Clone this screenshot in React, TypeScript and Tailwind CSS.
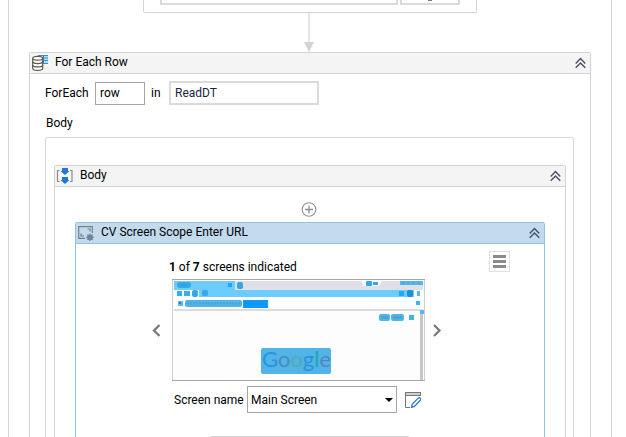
import type { ReactNode } from "react";

function CollapseButton({ label }: { label: string }) {
  return (
    <button type="button" aria-label={label} className="mr-1 h-3 w-3">
      <svg viewBox="0 0 12 12" className="h-3 w-3" fill="none" stroke="#465063" strokeWidth="1.4">
        <path d="M1.7 6.400 6.500 1.600l4.800 4.800M1.700 10.800 6.500 6l4.800 4.800" />
      </svg>
    </button>
  );
}

function DataTableIcon() {
  return (
    <svg viewBox="0 0 17 16" className="h-4 w-[17px]">
      <rect x="7" y="0" width="10" height="9" fill="#b5daf2" />
      <path d="M7 .5h10M7 3h10M7 5.500h10M7 8.500h10" stroke="#3b8dca" />
      <path d="M12.500 0v9" stroke="#3b8dca" />
      <path
        d="M1.700 3.400v9.800c0 1.200 2.200 2.100 5 2.100s5-.9 5-2.100V3.400"
        fill="#fff"
        stroke="#5c5a4c"
        strokeWidth="1.200"
      />
      <ellipse cx="6.700" cy="3.300" rx="5" ry="1.900" fill="#fff" stroke="#5c5a4c" strokeWidth="1.200" />
      <path
        d="M1.700 6.600c0 1.200 2.200 2 5 2s5-.8 5-2M1.700 9.900c0 1.200 2.200 2 5 2s5-.8 5-2"
        fill="none"
        stroke="#5c5a4c"
        strokeWidth="1.200"
      />
    </svg>
  );
}

function SequenceIcon() {
  return (
    <svg viewBox="0 0 17 16" className="h-4 w-[17px]">
      <path d="M3.500 2.500h-2v11h2M14 2.500h2v11h-2" fill="none" stroke="#8a8a8a" strokeWidth="1.200" />
      <path d="M6 0h6v3h1.500L9 7 4.500 3H6z" fill="#1f78d8" />
      <path d="M6 9h6v3h1.500L9 16l-4.500-4H6z" fill="#1f78d8" />
    </svg>
  );
}

function ScreenScopeIcon() {
  return (
    <svg viewBox="0 0 17 16" className="h-4 w-[17px]" fill="none" stroke="#75808a">
      <path d="M15.300 8V1.700H1.700v11.600H8" strokeWidth="1.200" />
      <path d="M10.500 4H13v2.500M4 8.500V11h3" strokeWidth="1.200" />
      <circle cx="13" cy="12.300" r="2.100" strokeWidth="1.500" fill="#3d8edb" />
      <path
        d="M13 8.600v1.500M13 14.500V16M9.300 12.300h1.500M15.200 12.300h1.500M10.400 9.700l1 1M14.600 13.900l1 1M10.400 14.900l1-1M14.600 10.700l1-1"
        strokeWidth="1.200"
      />
    </svg>
  );
}

function EditIcon() {
  return (
    <svg viewBox="0 0 16 16" className="h-4 w-4" fill="none">
      <path d="M.5 0v15.500H5M15.500 0v4" stroke="#77777b" />
      <path d="M0 .5h16M0 3.500h16" stroke="#777" />
      <path d="M1 2h14" stroke="#cfcfcf" strokeWidth="2" />
      <path
        d="m6.500 15.300.8-3.200 6.200-6.200c.9-.8 3 1.200 2.100 2.100l-6.200 6.400z"
        fill="#fff"
        stroke="#2775dc"
        strokeWidth="1.300"
      />
    </svg>
  );
}

/* Captured browser window with the detected regions highlighted */
function ScreenThumbnail() {
  return (
    <svg viewBox="0 0 253 102" className="h-[102px] w-[253px]" role="img" aria-label="Main Screen">
      <rect width="253" height="102" fill="#fdfdfd" />
      <rect x="2" y="2" width="249" height="9" fill="#dfe0e7" />
      <rect x="2" y="2" width="61" height="9" fill="#6dccff" />
      <rect x="5" y="3" width="14" height="6" rx="3" fill="#35aae8" />
      <path d="M8 6h8" stroke="#2f9bd8" />
      <rect x="56" y="4" width="4" height="4" fill="#1ea5f2" />
      <rect x="65" y="3" width="6" height="7" rx="2" fill="#39a5df" />
      <path d="M189 2h21l-3 5h-15z" fill="#fff" />
      <rect x="194" y="2" width="6" height="5" rx="1" fill="#33a7e5" />
      <rect x="201" y="3" width="5" height="3" fill="#33a7e5" />
      <rect x="228" y="2" width="23" height="4" fill="#55b7ea" />
      <path d="M230 4h19" stroke="#45a6dc" strokeDasharray="3 2" />

      <rect x="2" y="11" width="249" height="19" fill="#fff" />
      <rect x="27" y="11" width="215" height="7" fill="#6dccff" />
      <rect x="5" y="12" width="5" height="5" fill="#2fb0f8" />
      <rect x="12" y="12" width="6" height="5" fill="#2fb0f8" />
      <rect x="20" y="11" width="6" height="7" rx="2" fill="#35a6e4" />
      <rect x="30" y="11" width="6" height="6" rx="2" fill="#35a9ea" />
      <rect x="227" y="12" width="5" height="5" fill="#22a9f3" />
      <rect x="235" y="11" width="6" height="7" rx="2" fill="#1592dd" />
      <rect x="245" y="12" width="3" height="5" fill="#4abaf5" />

      <rect x="6" y="22" width="5" height="5" fill="#55bdf2" />
      <path d="M7 24h2" stroke="#46759b" strokeWidth="2" />
      <rect x="13" y="21" width="57" height="7" rx="2" fill="#50b4e9" />
      <path d="M15 24.500h53" stroke="#46a6dc" strokeWidth="2" strokeDasharray="2 1" />
      <rect x="71" y="21" width="25" height="8" fill="#0b9bfb" />
      <path d="M74 24.500h18" stroke="#1b90ea" strokeWidth="2" />
      <rect x="244" y="22" width="4" height="4" fill="#3cb2f1" />
      <rect x="2" y="30" width="249" height="2" fill="#dcdcdc" />

      <rect x="248" y="32" width="3" height="69" fill="#c6c6c6" />
      <rect x="248" y="31" width="4" height="4" fill="#51b9f3" />
      <rect x="207" y="35" width="11" height="7" rx="2" fill="#50b4e6" />
      <path d="M209 38.500h7" stroke="#46a0d0" strokeWidth="2" />
      <rect x="219" y="35" width="13" height="7" rx="2" fill="#50b4e6" />
      <path d="M221 38.500h9" stroke="#46a0d0" strokeWidth="2" />
      <rect x="237" y="36" width="5" height="5" fill="#45b2e8" />

      <rect x="89" y="69" width="70" height="26" rx="2" fill="#50b4e6" />
      <text x="90" y="88" fontFamily="Lato, sans-serif" fontSize="22">
        <tspan fill="#2c92dc">G</tspan>
        <tspan fill="#4e88bd">o</tspan>
        <tspan fill="#54aaa8">o</tspan>
        <tspan fill="#2c92dc">g</tspan>
        <tspan fill="#2ba2b2">l</tspan>
        <tspan fill="#4e88bd">e</tspan>
      </text>

      <path d="M.5 1v100M252.500 1v100" stroke="#cfcfcf" />
      <path d="M0 .5h253M0 101.500h253" stroke="#a6a6a6" />
    </svg>
  );
}

interface ActivityHeaderProps {
  icon: ReactNode;
  title: string;
  selected?: boolean;
}

function ActivityHeader({ icon, title, selected }: ActivityHeaderProps) {
  return (
    <div
      className={
        selected
          ? "flex h-[21px] items-center border-b border-[#94c2e3] bg-[#c1dbed] pl-px"
          : "flex h-[21px] items-center border-b border-[#d3d3d3] bg-[#f4f4f4] pl-px"
      }
    >
      <span className="w-6">{icon}</span>
      <h2 className="flex-1 pb-[2px]">{title}</h2>
      <CollapseButton label={`Collapse ${title}`} />
    </div>
  );
}

export default function App() {
  return (
    <div className="h-screen overflow-hidden bg-white font-[Roboto,'Noto_Sans',sans-serif] text-[12px] leading-4 text-black">
      <main className="mr-[14px] ml-2 border-x border-[#d3d3d3]">
        {/* Tail of the previous activity */}
        <div className="mx-auto flex h-[13px] w-[334px] justify-center gap-[2px] rounded-b-[2px] border border-t-0 border-[#d3d3d3]">
          <div className="h-[5px] w-[238px] border-2 border-t-0 border-[#dadada]" />
          <div className="flex h-[5px] w-[60px] justify-center border-2 border-t-0 border-[#dadada]">
            <span className="h-px w-1 bg-[#6d7f98]" />
          </div>
        </div>

        <svg viewBox="0 0 12 39" className="mx-auto block h-[39px] w-3">
          <path d="M5 0v30" stroke="#e6e6e6" strokeWidth="2" />
          <path d="M0 29h10L5 39z" fill="#d3d3d3" />
        </svg>

        {/* For Each Row */}
        <section className="mx-5 rounded-t-[2px] border border-[#d3d3d3]">
          <ActivityHeader icon={<DataTableIcon />} title="For Each Row" />

          <div className="pt-[7px] pr-4 pl-[15px]">
            <div className="flex h-6 items-center">
              <label htmlFor="item" className="w-[50px]">
                ForEach
              </label>
              <input
                id="item"
                defaultValue="row"
                className="h-[23px] w-[50px] border border-[#a5a5a5] bg-white px-1 outline-none"
              />
              <label htmlFor="table" className="w-6 pl-[6px]">
                in
              </label>
              <input
                id="table"
                defaultValue="ReadDT"
                className="h-6 w-[150px] border-2 border-[#dadada] bg-white px-1 text-[#1b2340] outline-none"
              />
            </div>

            <h3 className="mt-[10px] pl-px">Body</h3>

            <div className="mt-[6px] rounded-t-[2px] border border-[#d8d8d8] pt-[27px] pr-[7px] pl-2">
              <section className="rounded-t-[2px] border border-[#d3d3d3]">
                <ActivityHeader icon={<SequenceIcon />} title="Body" />

                <div className="px-5 pt-[14px]">
                  <button type="button" aria-label="Add activity" className="mx-auto block h-4 w-[18px]">
                    <svg viewBox="0 0 16 16" className="h-4 w-4" fill="none" stroke="#8f8f8f">
                      <circle cx="8" cy="8.500" r="6.800" strokeWidth="1.100" />
                      <path d="M8 4.500v8M4 8.500h8" strokeWidth="1.300" />
                    </svg>
                  </button>

                  {/* CV Screen Scope */}
                  <section className="mt-[5px] rounded-t-[2px] border border-[#94c2e3]">
                    <ActivityHeader
                      icon={<ScreenScopeIcon />}
                      title="CV Screen Scope Enter URL"
                      selected
                    />

                    <div className="flex items-start justify-between pt-[7px] pr-[34px] pl-[72px]">
                      <div>
                        <p className="mt-2 pl-[21px]">
                          <b>1</b> of <b>7</b> screens indicated
                        </p>

                        <div className="mt-1 flex items-center">
                          <button type="button" aria-label="Previous screen" className="w-6 pl-1">
                            <svg viewBox="0 0 9 13" className="h-[13px] w-[9px]" fill="none">
                              <path d="M7.500 1 2 6.500 7.500 12" stroke="#777" strokeWidth="2.200" />
                            </svg>
                          </button>
                          <ScreenThumbnail />
                          <button type="button" aria-label="Next screen" className="w-6 pl-2">
                            <svg viewBox="0 0 9 13" className="h-[13px] w-[9px]" fill="none">
                              <path d="M1 1l5.500 5.500L1 12" stroke="#777" strokeWidth="2.200" />
                            </svg>
                          </button>
                        </div>

                        <div className="mt-[5px] flex items-center pl-[26px]">
                          <label htmlFor="screen" className="w-[73px] whitespace-nowrap">
                            Screen name
                          </label>
                          <div className="relative">
                            <select
                              id="screen"
                              className="h-[27px] w-[150px] appearance-none border border-[#a5a5a5] bg-white px-[3px] outline-none"
                            >
                              <option>Main Screen</option>
                            </select>
                            <svg
                              viewBox="0 0 8 4"
                              className="pointer-events-none absolute top-3 right-1 h-1 w-2"
                            >
                              <path d="M0 0h8L4 4z" fill="#000" />
                            </svg>
                          </div>
                          <button type="button" aria-label="Edit screen" className="ml-2 h-4 w-4">
                            <EditIcon />
                          </button>
                        </div>
                      </div>

                      <button
                        type="button"
                        aria-label="Options"
                        className="flex h-[21px] w-[21px] flex-col items-center justify-center gap-[2px] border border-[#dedee6]"
                      >
                        <span className="h-[3px] w-[13px] bg-[#8b8b8b]" />
                        <span className="h-[3px] w-[13px] bg-[#8b8b8b]" />
                        <span className="h-[3px] w-[13px] bg-[#8b8b8b]" />
                      </button>
                    </div>

                    <div className="mx-auto mt-[23px] h-8 w-[200px] rounded-t-[2px] border border-[#d3d3d3]" />
                  </section>
                </div>
              </section>
            </div>
          </div>
        </section>
      </main>
    </div>
  );
}
